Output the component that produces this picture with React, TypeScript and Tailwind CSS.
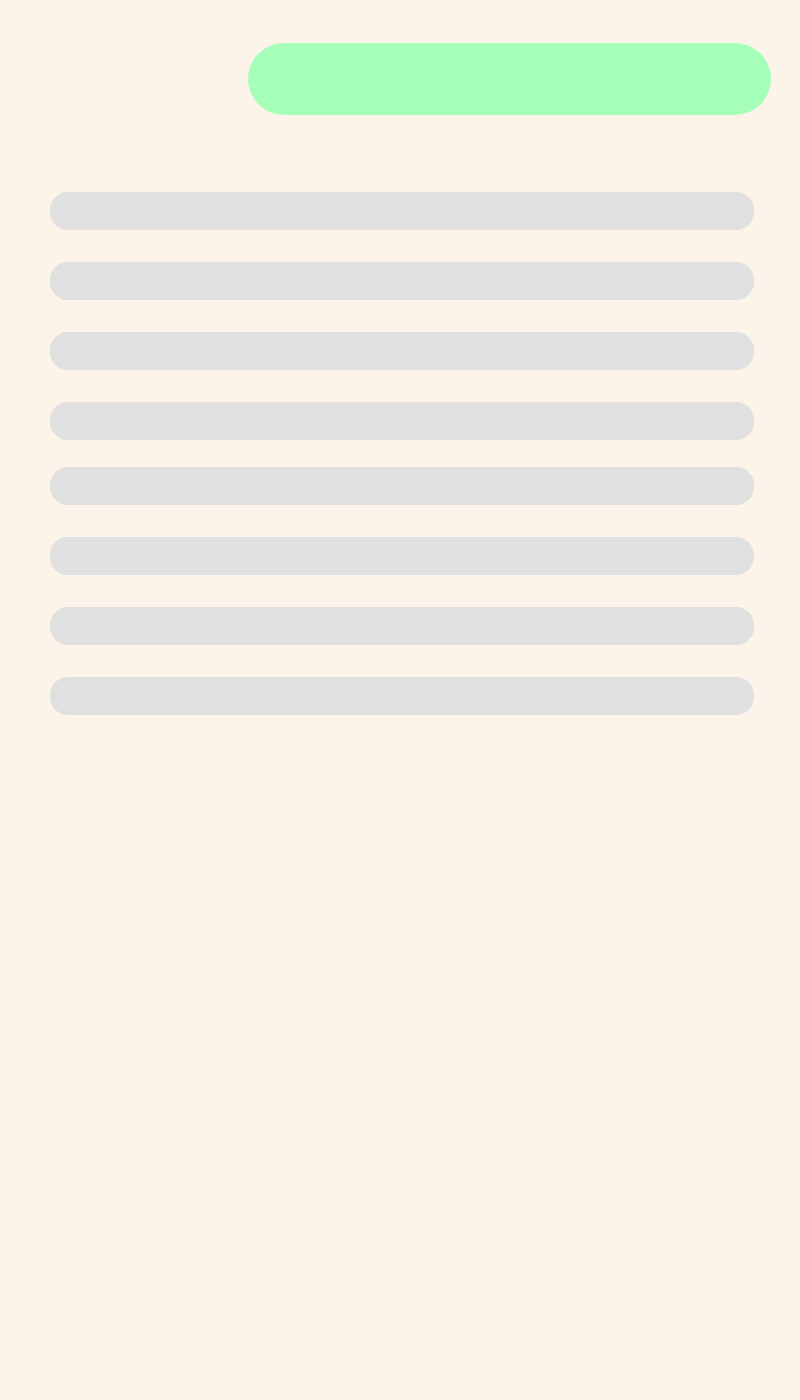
export default function App() {
  const top = [0, 1, 2, 3];
  const bottom = [0, 1, 2, 3];
  return (
    <div className="min-h-[1400px] w-full bg-[#fcf4e8] font-['Liberation_Sans',sans-serif]">
      <div className="flex justify-end pt-[43px] pr-[29px]">
        <div className="h-[72px] w-[523px] rounded-full bg-[#a6ffb8]" />
      </div>
      <div className="mt-[77px] pl-[50px] pr-[46px]">
        <div className="flex flex-col gap-8">
          {top.map((i) => (
            <div key={i} className="h-[38px] rounded-[18px] bg-[#e0e0e0]" />
          ))}
        </div>
        <div className="mt-[27px] flex flex-col gap-8">
          {bottom.map((i) => (
            <div key={i} className="h-[38px] rounded-[18px] bg-[#e0e0e0]" />
          ))}
        </div>
      </div>
    </div>
  );
}
